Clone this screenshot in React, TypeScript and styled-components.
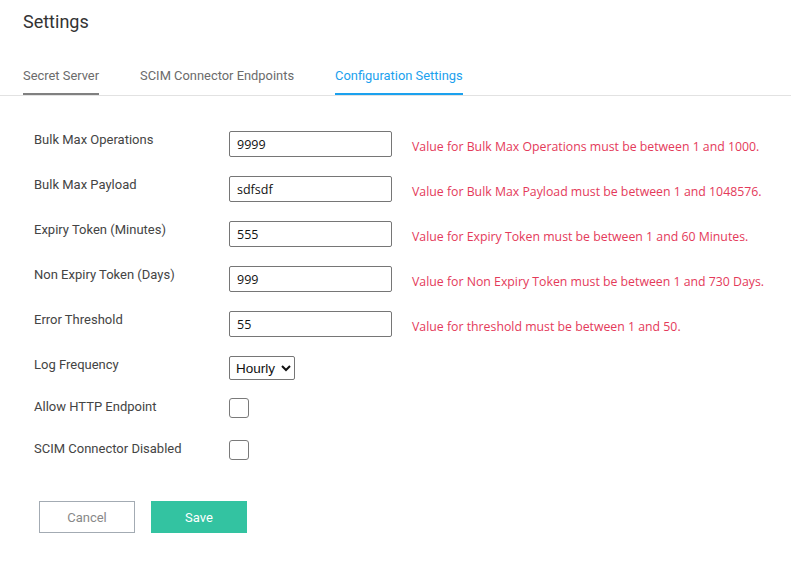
import React from "react";
import styled, { createGlobalStyle } from "styled-components";

const Global = createGlobalStyle`
  html, body { margin: 0; padding: 0; background: #fff; }
  body { font-family: Roboto, "Liberation Sans", sans-serif; }
  * { box-sizing: border-box; }
`;

const Page = styled.div`
  width: 791px;
  min-height: 583px;
  background: #fff;
`;

const Header = styled.div`
  padding: 10px 23px 0;
`;

const Title = styled.h1`
  margin: 0;
  font-size: 18px;
  line-height: 24px;
  font-weight: 400;
  color: #333;
`;

const TabBar = styled.div`
  display: flex;
  gap: 41px;
  margin-top: 34px;
  padding: 0 23px;
  border-bottom: 1px solid #e2e2e2;
`;

const Tab = styled.div<{ $active?: boolean; $underline?: boolean }>`
  font-size: 12.9px;
  line-height: 16px;
  padding-bottom: 9px;
  color: ${(p) => (p.$active ? "#1ba1ee" : "#6b6b6b")};
  border-bottom: 2px solid
    ${(p) => (p.$active ? "#1ba1ee" : p.$underline ? "#808080" : "transparent")};
`;

const Form = styled.div`
  padding: 35px 0 0 34px;
`;

const Row = styled.div<{ $gap: number }>`
  display: flex;
  align-items: flex-start;
  margin-bottom: ${(p) => p.$gap}px;
`;

const Label = styled.div<{ $offset?: number }>`
  width: 195px;
  flex: none;
  font-size: 13px;
  line-height: 16px;
  color: #444;
  padding-top: ${(p) => p.$offset ?? 1}px;
`;

const TextInput = styled.input`
  width: 163px;
  height: 26px;
  flex: none;
  border: 1px solid #767676;
  border-radius: 2px;
  padding: 0 7px;
  font-family: "Open Sans", "Noto Sans", sans-serif;
  font-size: 12.5px;
  color: #111;
  background: #fff;
  outline: none;
`;

const ErrorText = styled.div`
  margin-left: 20px;
  margin-top: 6px;
  font-family: "Open Sans", "Noto Sans", sans-serif;
  font-size: 12.3px;
  line-height: 20px;
  color: #e43a5a;
  white-space: nowrap;
`;

const Select = styled.select`
  width: 66px;
  height: 24px;
  border: 1px solid #767676;
  border-radius: 2px;
  font-family: "Liberation Sans", Arial, sans-serif;
  font-size: 13.5px;
  color: #111;
  background: #fff;
  padding: 0 0 0 2px;
`;

const Checkbox = styled.input`
  appearance: none;
  width: 20px;
  height: 20px;
  margin: 0;
  border: 1px solid #7a7a7a;
  border-radius: 3px;
  background: #fff;
`;

const Buttons = styled.div`
  display: flex;
  gap: 16px;
  padding-left: 5px;
  margin-top: 41px;
`;

const Button = styled.button<{ $primary?: boolean }>`
  width: 96px;
  height: 32px;
  font-family: Roboto, "Liberation Sans", sans-serif;
  font-size: 13px;
  border: 1px solid ${(p) => (p.$primary ? "#33c3a1" : "#a3abb3")};
  background: ${(p) => (p.$primary ? "#33c3a1" : "#fff")};
  color: ${(p) => (p.$primary ? "#fff" : "#888")};
  cursor: pointer;
  padding: 0;
`;

const fields = [
  { label: "Bulk Max Operations", value: "9999", error: "Value for Bulk Max Operations must be between 1 and 1000." },
  { label: "Bulk Max Payload", value: "sdfsdf", error: "Value for Bulk Max Payload must be between 1 and 1048576." },
  { label: "Expiry Token (Minutes)", value: "555", error: "Value for Expiry Token must be between 1 and 60 Minutes." },
  { label: "Non Expiry Token (Days)", value: "999", error: "Value for Non Expiry Token must be between 1 and 730 Days." },
  { label: "Error Threshold", value: "55", error: "Value for threshold must be between 1 and 50." },
];

export default function App() {
  return (
    <Page>
      <Global />
      <Header>
        <Title>Settings</Title>
      </Header>
      <TabBar>
        <Tab $underline>Secret Server</Tab>
        <Tab>SCIM Connector Endpoints</Tab>
        <Tab $active>Configuration Settings</Tab>
      </TabBar>
      <Form>
        {fields.map((f) => (
          <Row key={f.label} $gap={19}>
            <Label $offset={1}>{f.label}</Label>
            <TextInput defaultValue={f.value} />
            <ErrorText>{f.error}</ErrorText>
          </Row>
        ))}
        <Row $gap={18}>
          <Label $offset={1}>Log Frequency</Label>
          <Select defaultValue="Hourly">
            <option>Hourly</option>
            <option>Daily</option>
            <option>Weekly</option>
          </Select>
        </Row>
        <Row $gap={22}>
          <Label $offset={1}>Allow HTTP Endpoint</Label>
          <Checkbox type="checkbox" />
        </Row>
        <Row $gap={0}>
          <Label $offset={1}>SCIM Connector Disabled</Label>
          <Checkbox type="checkbox" />
        </Row>
        <Buttons>
          <Button>Cancel</Button>
          <Button $primary>Save</Button>
        </Buttons>
      </Form>
    </Page>
  );
}
